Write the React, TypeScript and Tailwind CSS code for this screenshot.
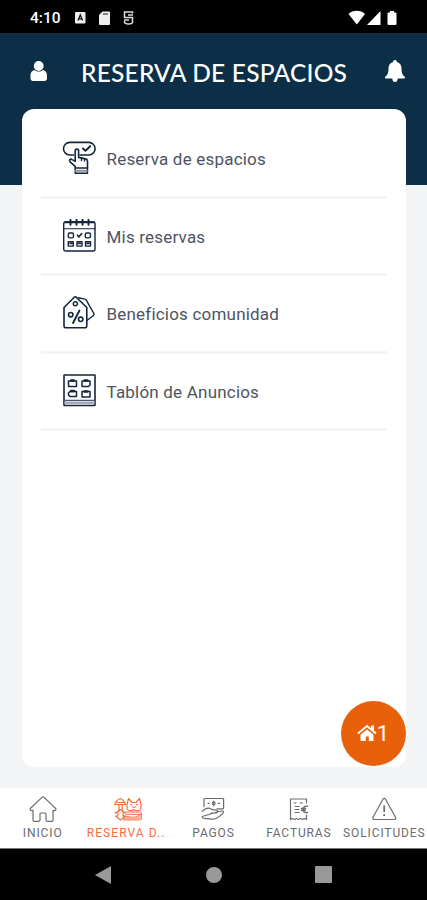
import type { ReactNode } from "react";

const menu = [
  { label: "Reserva de espacios", icon: <BookingIcon /> },
  { label: "Mis reservas", icon: <CalendarIcon /> },
  { label: "Beneficios comunidad", icon: <TagsIcon /> },
  { label: "Tablón de Anuncios", icon: <BoardIcon /> },
];

const tabs = [
  { label: "INICIO", icon: <HomeIcon />, active: false },
  { label: "RESERVA D..", icon: <SpacesIcon />, active: true },
  { label: "PAGOS", icon: <PaymentIcon />, active: false },
  { label: "FACTURAS", icon: <InvoiceIcon />, active: false },
  { label: "SOLICITUDES", icon: <WarningIcon />, active: false },
];

function MenuSvg({ children }: { children: ReactNode }) {
  return (
    <svg width="34" height="34" viewBox="0 0 34 34" fill="none" stroke="#14253c" strokeWidth="1.6" strokeLinejoin="round" strokeLinecap="round">
      {children}
    </svg>
  );
}

function BookingIcon() {
  return (
    <MenuSvg>
      <path d="M11.5 14H7.8a6.2 6.2 0 0 1 0-12.6h19a6.2 6.2 0 0 1 0 12.6H18" />
      <path d="M21 7.5l2.5 2.2 4.7-4.5" strokeWidth="1.9" />
      <path d="M13.2 27v-1.6L8.1 20.8c-1.5-1.7.2-3.3 2-2.2l3.1 1.7V9.8c0-2.3 3.4-2.3 3.4 0v6.6l7 1.5c1.3.3 1.9 1.2 1.9 2.4V27" />
      <path d="M13.2 27h12.3v5.3H13.2zM19.5 17.5v2M22.5 18v2" strokeWidth="1.4" />
      <path d="M14 29.7h10.7" stroke="#8791a0" strokeWidth="2" />
    </MenuSvg>
  );
}

function CalendarIcon() {
  return (
    <MenuSvg>
      <rect x="1.7" y="3" width="31.3" height="29" rx="2" strokeWidth="1.4" />
      <path d="M2 9.8h31" strokeWidth="1.1" />
      <path d="M8.5.8v5M14.5.8v5M20.5.8v5M26.5.8v5M3 3.2h29" strokeWidth="1.9" />
      <rect x="6.3" y="14" width="5.2" height="4.9" rx="1.4" strokeWidth="1.4" />
      <path d="M15.5 16.2l1.4 1.7 2.8-3.4" />
      <rect x="23.3" y="14" width="5.2" height="4.9" rx="1.4" strokeWidth="1.4" />
      <path d="M6.3 22.7h5v4.4h-5zM15 22.7h5v4.4h-5zM23.5 22.7h5v4.4h-5zM8 24.5h2M16.5 24.5h2M25 24.5h2" strokeWidth="1.4" />
    </MenuSvg>
  );
}

function TagsIcon() {
  return (
    <MenuSvg>
      <path d="M2 11.5L12.3 1.2c.6-.5 1.3-.5 1.9 0L24.8 11.5v18.2c0 1.3-.8 2-2 2H4c-1.2 0-2-.7-2-2z" />
      <path d="M16.5 1.8l6.3 1.3c.8.2 1.2.5 1.6 1.2l7.5 13.2c.5 1-.1 1.6-.7 2.2l-6 4.6" strokeWidth="1.4" />
      <circle cx="13.3" cy="7.7" r="2" strokeWidth="1.4" />
      <path d="M17.5 14.5L11 27" strokeWidth="1.9" />
      <circle cx="8.7" cy="18.7" r="2.2" />
      <circle cx="18.7" cy="23.3" r="2.2" />
    </MenuSvg>
  );
}

function BoardIcon() {
  return (
    <MenuSvg>
      <rect x="2" y="1" width="31" height="30.5" rx=".5" />
      <path d="M2.5 26.3h30" stroke="#4c5869" strokeWidth="1.3" />
      <path d="M3.5 28.8h28" stroke="#a3abb8" strokeWidth="2.6" />
      <path d="M6.5 7h8v5.5h-8zM20 7h8v4l-1.5 1.5H20zM8 17.5h6.5v5H8L6.5 21v-2zM20 17.5h8V23h-8z" strokeWidth="1.5" />
      <path d="M9 6.5h3M22.5 6.5h3M9 17h3M22.5 17.5h3" strokeWidth="2.3" />
    </MenuSvg>
  );
}

function TabSvg({ children }: { children: ReactNode }) {
  return (
    <svg width="28" height="28" viewBox="0 0 28 28" fill="none" stroke="currentColor" strokeWidth="1.2" strokeLinejoin="round" strokeLinecap="round">
      {children}
    </svg>
  );
}

function HomeIcon() {
  return (
    <TabSvg>
      <path d="M12.9 2.4L1.6 13.2c-1.3 1.5.2 3.1 1.8 2.2H4V25c0 .8.5 1.3 1.3 1.3h4.5c.7 0 1.2-.5 1.2-1.2V19c0-.6.3-1 .9-1h4.2c.6 0 .9.4.9 1v6.1c0 .7.5 1.2 1.2 1.2h4.5c.8 0 1.3-.5 1.3-1.3v-9.6h.6c1.6.9 3.1-.7 1.8-2.2L15.1 2.4c-.7-.6-1.5-.6-2.2 0z" />
    </TabSvg>
  );
}

function SpacesIcon() {
  return (
    <TabSvg>
      <path d="M6.5 3.5C3 5 1.2 7 .8 9.5h10.8C11 7 9.500 5 6.500 3.500zM5 9.500v7M8.200 9.500v7M3 7.500h7" />
      <path d="M6.500 14.500L1 18h3v3H1.500l5 4 5-4H9v-3h2.500z" />
      <path d="M13 14V9.500l1.500-6L18 7.500h4l3.500-4L27 9.500V14c-2 2.500-4.500 2.500-7 .5-2.500 2-5 2-7-.5z" />
      <path d="M16.500 9.500h1M22.500 9.500h1M18 11.500l2 1.200 2-1.200M12 17h15M12 19.300h15" strokeWidth="1" />
      <path d="M10 21c2 .5 4 .2 6 .8 4 1 8 0 11.500-3.800V24c-1 .9-2 1-3.500 1H10z" fill="currentColor" fillOpacity=".5" strokeWidth=".8" />
    </TabSvg>
  );
}

function PaymentIcon() {
  return (
    <TabSvg>
      <path d="M5 11.500V4.300c0-.5.3-.8.800-.8h18c.5 0 .8.300.8.800V13c0 .5-.3.800-.8.800H18" />
      <circle cx="14.700" cy="8.300" r="1.500" strokeWidth="1.100" />
      <path d="M9 8.300h1.200M19.300 8.300h1.200M14.700 6v5" strokeWidth="1.200" />
      <path d="M3.200 16.500c2-2.500 4-3.300 6.500-3.300 2 0 3 1.600 5 1.600H17c2.200.2 2.200 3 0 3.200h-5M18 17l4.500-1c1.800-.3 2.600 1 1.400 2.200-2.400 2.500-5 5.300-8.400 5.800-3.500.5-5.500-.3-8.500-.3-2 0-3.800-.7-3.800-2.200z" />
    </TabSvg>
  );
}

function InvoiceIcon() {
  return (
    <TabSvg>
      <path d="M21.500 8V4h-16v20.500l2-1 2 1 2-1 2 1 2-1 2 1 2-1 2 1V20" />
      <path d="M9 8h2M15 8h2.500M10 11.500h4M10 14.500h4M10 17.500h4" />
      <path d="M22.500 11.300c-5.500-1.300-6.500 7.500 0 6.200M16.500 13.500h4M16.500 15.300h4" strokeWidth="1.400" />
    </TabSvg>
  );
}

function WarningIcon() {
  return (
    <TabSvg>
      <path d="M12.900 4.200L3 22.300c-.5 1.200 0 2.200 1.200 2.200h20.100c1.200 0 1.700-1 1.200-2.200L15.500 4.200c-.6-1-2-1-2.600 0z" />
      <path d="M14.200 11v5.500" strokeWidth="1.700" />
      <circle cx="14.200" cy="20" r=".5" fill="currentColor" />
    </TabSvg>
  );
}

function StatusBar() {
  return (
    <div className="flex h-[33px] items-center bg-black pl-[30px] pr-[29px] text-white">
      <span className="w-[44px] pt-[4px] text-[15.5px] font-medium leading-none">4:10</span>
      <svg className="mt-[2px]" width="62" height="16" viewBox="0 0 62 16" fill="none">
        <rect x="1" y="2" width="10.5" height="11.5" rx="1" fill="#eee" />
        <path d="M4 10.500l2.300-5.500 2.300 5.500M5 8.800h3" stroke="#111" strokeWidth="1.3" />
        <path d="M28.500 1.500H35a1 1 0 0 1 1 1V14a1 1 0 0 1-1 1H26a1 1 0 0 1-1-1V5z" fill="#eee" />
        <path d="M29 4h5" stroke="#444" strokeWidth="1.3" />
        <path d="M58.500 3.500V2h-8v5.500h8V12c0 2.700-8 2.700-8 0v-1M54 5h5M50 10h5" stroke="#ddd" strokeWidth="1.5" />
      </svg>
      <svg className="ml-auto mt-[2px]" width="50" height="16" viewBox="0 0 50 16" fill="#fff">
        <path d="M.5 4C5-.2 12.500-.2 17 4L8.800 14.500z" />
        <path d="M32.500 1v14H19z" />
        <path d="M42 1h4v1.500h1.500a1 1 0 0 1 1 1V14a1 1 0 0 1-1 1h-7a1 1 0 0 1-1-1V3.500a1 1 0 0 1 1-1H42z" />
      </svg>
    </div>
  );
}

function Header() {
  return (
    <header className="flex h-[76px] items-center pl-[30px] pr-[21px] text-white">
      <svg width="18" height="22" viewBox="0 0 18 22" fill="#fff">
        <circle cx="8.7" cy="6" r="4.9" />
        <path d="M4.500 10C2 10.500.5 12.500.5 15.500v3c0 1.500 1 2.500 2.500 2.500h11.500c1.500 0 2.500-1 2.500-2.500v-3c0-3-1.500-5-4-5.500-2.500 2-6 2-8.500 0z" />
      </svg>
      <h1 className="ml-[33px] w-[268px] whitespace-nowrap pt-[4px] font-[Lato] text-[24.5px] font-medium leading-none tracking-[0.22px]">
        RESERVA DE ESPACIOS
      </h1>
      <svg className="ml-auto" width="22" height="24" viewBox="0 0 22 24" fill="#fff">
        <path d="M11 1c-1.300 0-1.900.8-1.900 1.900C6 3.700 4.500 6 4.500 9.500c0 4.500-1 6.500-3.200 8.300-.8.700-.4 1.700.7 1.700h18c1.100 0 1.500-1 .7-1.700-2.200-1.800-3.200-3.800-3.200-8.300 0-3.500-1.500-5.800-4.600-6.600C12.900 1.800 12.300 1 11 1zM8.300 19.300a2.700 3.700 0 0 0 5.400 0z" />
      </svg>
    </header>
  );
}

function TabBar() {
  return (
    <nav className="grid h-[60px] grid-cols-5 bg-white text-[#6c6c6c]">
      {tabs.map((tab) => (
        <div
          key={tab.label}
          className={`flex flex-col items-center pt-[7px] ${tab.active ? "tracking-[1.05px] text-[#f0703f]" : "tracking-[0.88px]"}`}
        >
          {tab.icon}
          <span className={`mt-[4px] whitespace-nowrap text-[12px] leading-[13px] ${tab.active ? "pr-[4px]" : ""}`}>{tab.label}</span>
        </div>
      ))}
    </nav>
  );
}

export default function App() {
  return (
    <div className="flex h-[900px] w-[427px] flex-col overflow-hidden bg-[#f2f4f6] font-[Roboto,sans-serif]">
      <StatusBar />
      <div className="h-[755px] bg-linear-to-b from-[#0c2f47] from-[152px] to-[#f2f4f6] to-[152px]">
        <Header />
        <main className="relative mx-auto h-[658px] w-[384px] rounded-[12px] bg-white px-[19px] pt-[12px]">
          {menu.map((item) => (
            <div key={item.label} className="flex h-[77.6px] items-center border-b-[3px] border-[#f5f5f6] pl-[21px]">
              {item.icon}
              <span className="ml-[11px] pt-[3px] text-[17px] tracking-[0.2px] text-[#4d545f]">{item.label}</span>
            </div>
          ))}
          <button className="absolute bottom-[1px] right-0 flex size-[65px] items-center justify-center rounded-full bg-[#e9600b] text-white">
            <svg className="mb-[1px]" width="20" height="18" viewBox="0 0 20 18" fill="none">
              <path d="M1 9.500L10 2l9 7.500" stroke="#fff" strokeWidth="2" />
              <path d="M14 1.500h3v6l-3-2.500zM3.500 10.800L10 5.400l6.500 5.400V17h-4.700v-4.500h-3V17H3.500z" fill="#fff" />
            </svg>
            <span className="pt-[1px] text-[22px] leading-none">1</span>
          </button>
        </main>
      </div>
      <TabBar />
      <div className="flex h-[52px] items-center border-t border-[#777] bg-black">
        <svg className="ml-[95px]" width="16" height="18" viewBox="0 0 16 18" fill="#999">
          <path d="M0 9L16 0v18z" />
        </svg>
        <span className="ml-[95px] size-[16px] rounded-full bg-[#999]" />
        <span className="ml-[93px] size-[17px] rounded-[1px] bg-[#999]" />
      </div>
    </div>
  );
}
